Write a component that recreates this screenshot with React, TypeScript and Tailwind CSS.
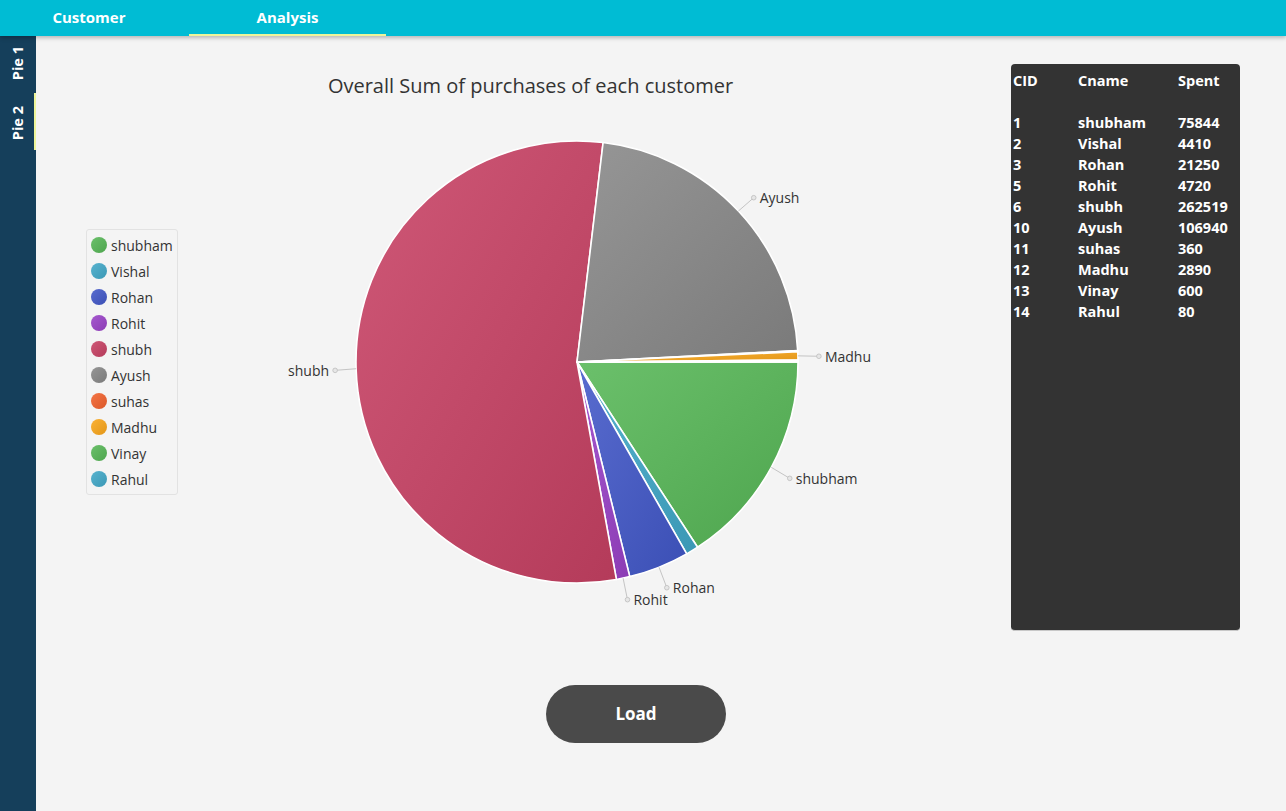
import React from "react";

type Item = { name: string; v: number; c: string; label: boolean };

const data: Item[] = [
  { name: "shubham", v: 75844, c: "#57b757", label: true },
  { name: "Vishal", v: 4410, c: "#41a9c9", label: false },
  { name: "Rohan", v: 21250, c: "#4258c9", label: true },
  { name: "Rohit", v: 4720, c: "#9a42c8", label: true },
  { name: "shubh", v: 262519, c: "#c84164", label: true },
  { name: "Ayush", v: 106940, c: "#888888", label: true },
  { name: "suhas", v: 360, c: "#f3622d", label: false },
  { name: "Madhu", v: 2890, c: "#fba71b", label: true },
  { name: "Vinay", v: 600, c: "#57b757", label: false },
  { name: "Rahul", v: 80, c: "#41a9c9", label: false },
];

const table = [
  ["1", "shubham", "75844"],
  ["2", "Vishal", "4410"],
  ["3", "Rohan", "21250"],
  ["5", "Rohit", "4720"],
  ["6", "shubh", "262519"],
  ["10", "Ayush", "106940"],
  ["11", "suhas", "360"],
  ["12", "Madhu", "2890"],
  ["13", "Vinay", "600"],
  ["14", "Rahul", "80"],
];

function mix(hex: string, target: number, amt: number) {
  const n = parseInt(hex.slice(1), 16);
  const r = (n >> 16) & 255;
  const g = (n >> 8) & 255;
  const b = n & 255;
  const f = (x: number) => Math.round(x + (target - x) * amt);
  return `rgb(${f(r)},${f(g)},${f(b)})`;
}

function Pie() {
  const cx = 399;
  const cy = 262;
  const R = 221;
  const total = data.reduce((s, d) => s + d.v, 0);
  let a0 = 0;
  const slices = data.map((d, i) => {
    const sweep = (d.v / total) * 360;
    const s = a0;
    const e = a0 + sweep;
    a0 = e;
    const rad = (x: number) => (x * Math.PI) / 180;
    const x1 = cx + R * Math.cos(rad(s));
    const y1 = cy + R * Math.sin(rad(s));
    const x2 = cx + R * Math.cos(rad(e));
    const y2 = cy + R * Math.sin(rad(e));
    const large = sweep > 180 ? 1 : 0;
    const path = `M ${cx} ${cy} L ${x1} ${y1} A ${R} ${R} 0 ${large} 1 ${x2} ${y2} Z`;
    const mid = rad((s + e) / 2);
    return { d, i, path, mid };
  });
  return (
    <svg width="833" height="524" viewBox="0 0 833 524">
      <defs>
        {data.map((d, i) => (
          <linearGradient key={i} id={`g${i}`} x1="0" y1="0" x2="1" y2="1">
            <stop offset="0" stopColor={mix(d.c, 255, 0.12)} />
            <stop offset="1" stopColor={mix(d.c, 0, 0.1)} />
          </linearGradient>
        ))}
      </defs>
      {slices.map((s) => (
        <path key={s.i} d={s.path} fill={`url(#g${s.i})`} stroke="#ffffff" strokeWidth="1.6" strokeLinejoin="round" />
      ))}
      {slices
        .filter((s) => s.d.label)
        .map((s) => {
          const c = Math.cos(s.mid);
          const sn = Math.sin(s.mid);
          const ex = cx + R * c;
          const ey = cy + R * sn;
          const lx = cx + (R + 21) * c;
          const ly = cy + (R + 21) * sn + 1;
          const right = c >= 0;
          return (
            <g key={`l${s.i}`}>
              <line x1={ex} y1={ey} x2={lx} y2={ly} stroke="#c4c4c4" strokeWidth="1" />
              <circle cx={lx} cy={ly} r="2.3" fill="#e6e6e6" stroke="#bdbdbd" strokeWidth="0.8" />
              <text
                x={right ? lx + 6 : lx - 6}
                y={ly + 2}
                textAnchor={right ? "start" : "end"}
                dominantBaseline="middle"
                fontSize="14"
                fill="#333333"
                fontFamily="'Open Sans', sans-serif"
              >
                {s.d.name}
              </text>
            </g>
          );
        })}
    </svg>
  );
}

export default function App() {
  return (
    <div className="w-[1286px] h-[811px] flex flex-col bg-[#f4f4f4] font-['Open_Sans',sans-serif] overflow-hidden">
      <div className="h-[36px] bg-[#00bcd4] flex shrink-0 relative z-10 shadow-[0_2px_4px_rgba(0,0,0,0.25)]">
        <div className="w-[178px] h-full flex items-center justify-center text-white font-bold text-[15px] pb-[2px]">
          Customer
        </div>
        <div className="ml-[11px] w-[197px] h-full flex items-center justify-center text-white font-bold text-[15px] border-b-2 border-[#eef59a]">
          Analysis
        </div>
      </div>
      <div className="flex flex-1">
        <div className="w-[36px] bg-[#153f5b] flex flex-col shrink-0">
          <div className="h-[57px] flex items-center justify-center pb-[3px]">
            <span className="[writing-mode:vertical-rl] rotate-180 text-white font-bold text-[14.5px]">Pie 1</span>
          </div>
          <div className="h-[57px] flex items-center justify-center border-r-2 border-[#eef59a] pt-[3px]">
            <span className="[writing-mode:vertical-rl] rotate-180 text-white font-bold text-[14.5px] ml-[2px]">Pie 2</span>
          </div>
        </div>
        <div className="flex-1 flex flex-col">
          <div className="flex pt-[28px]">
            <div className="w-[975px] flex flex-col">
              <div className="mt-[8px] h-[28px] pl-[14px] text-center text-[20px] leading-[28px] text-[#333333]">
                Overall Sum of purchases of each customer
              </div>
              <div className="flex items-center h-[524px]">
                <div className="w-[142px] pl-[50px]">
                  <div className="w-[92px] border border-[#e2e2e2] rounded-[3px] pt-[2px] pb-[2px] pl-[4px]">
                    {data.map((d, i) => (
                      <div key={i} className="h-[26px] flex items-center gap-[4px]">
                        <span
                          className="w-[16px] h-[16px] rounded-full inline-block"
                          style={{ background: `linear-gradient(135deg, ${mix(d.c, 255, 0.12)}, ${mix(d.c, 0, 0.1)})` }}
                        />
                        <span className="text-[14px] text-[#333333]">{d.name}</span>
                      </div>
                    ))}
                  </div>
                </div>
                <Pie />
              </div>
            </div>
            <div className="w-[229px] h-[567px] bg-[#333333] rounded-[4px] border-b border-[#c8c8c8] pl-[2px] pt-[6px]">
              <div className="grid grid-cols-[65px_100px_1fr] text-white font-bold text-[14.5px] leading-[21px]">
                <div>CID</div>
                <div>Cname</div>
                <div>Spent</div>
                <div className="h-[21px]" />
                <div />
                <div />
                {table.map((r) => (
                  <React.Fragment key={r[0]}>
                    <div>{r[0]}</div>
                    <div>{r[1]}</div>
                    <div>{r[2]}</div>
                  </React.Fragment>
                ))}
              </div>
            </div>
          </div>
          <div className="pl-[510px] mt-[54px]">
            <button className="w-[180px] h-[58px] rounded-full bg-[#4a4a4a] text-white font-bold text-[17px]">Load</button>
          </div>
        </div>
      </div>
    </div>
  );
}
